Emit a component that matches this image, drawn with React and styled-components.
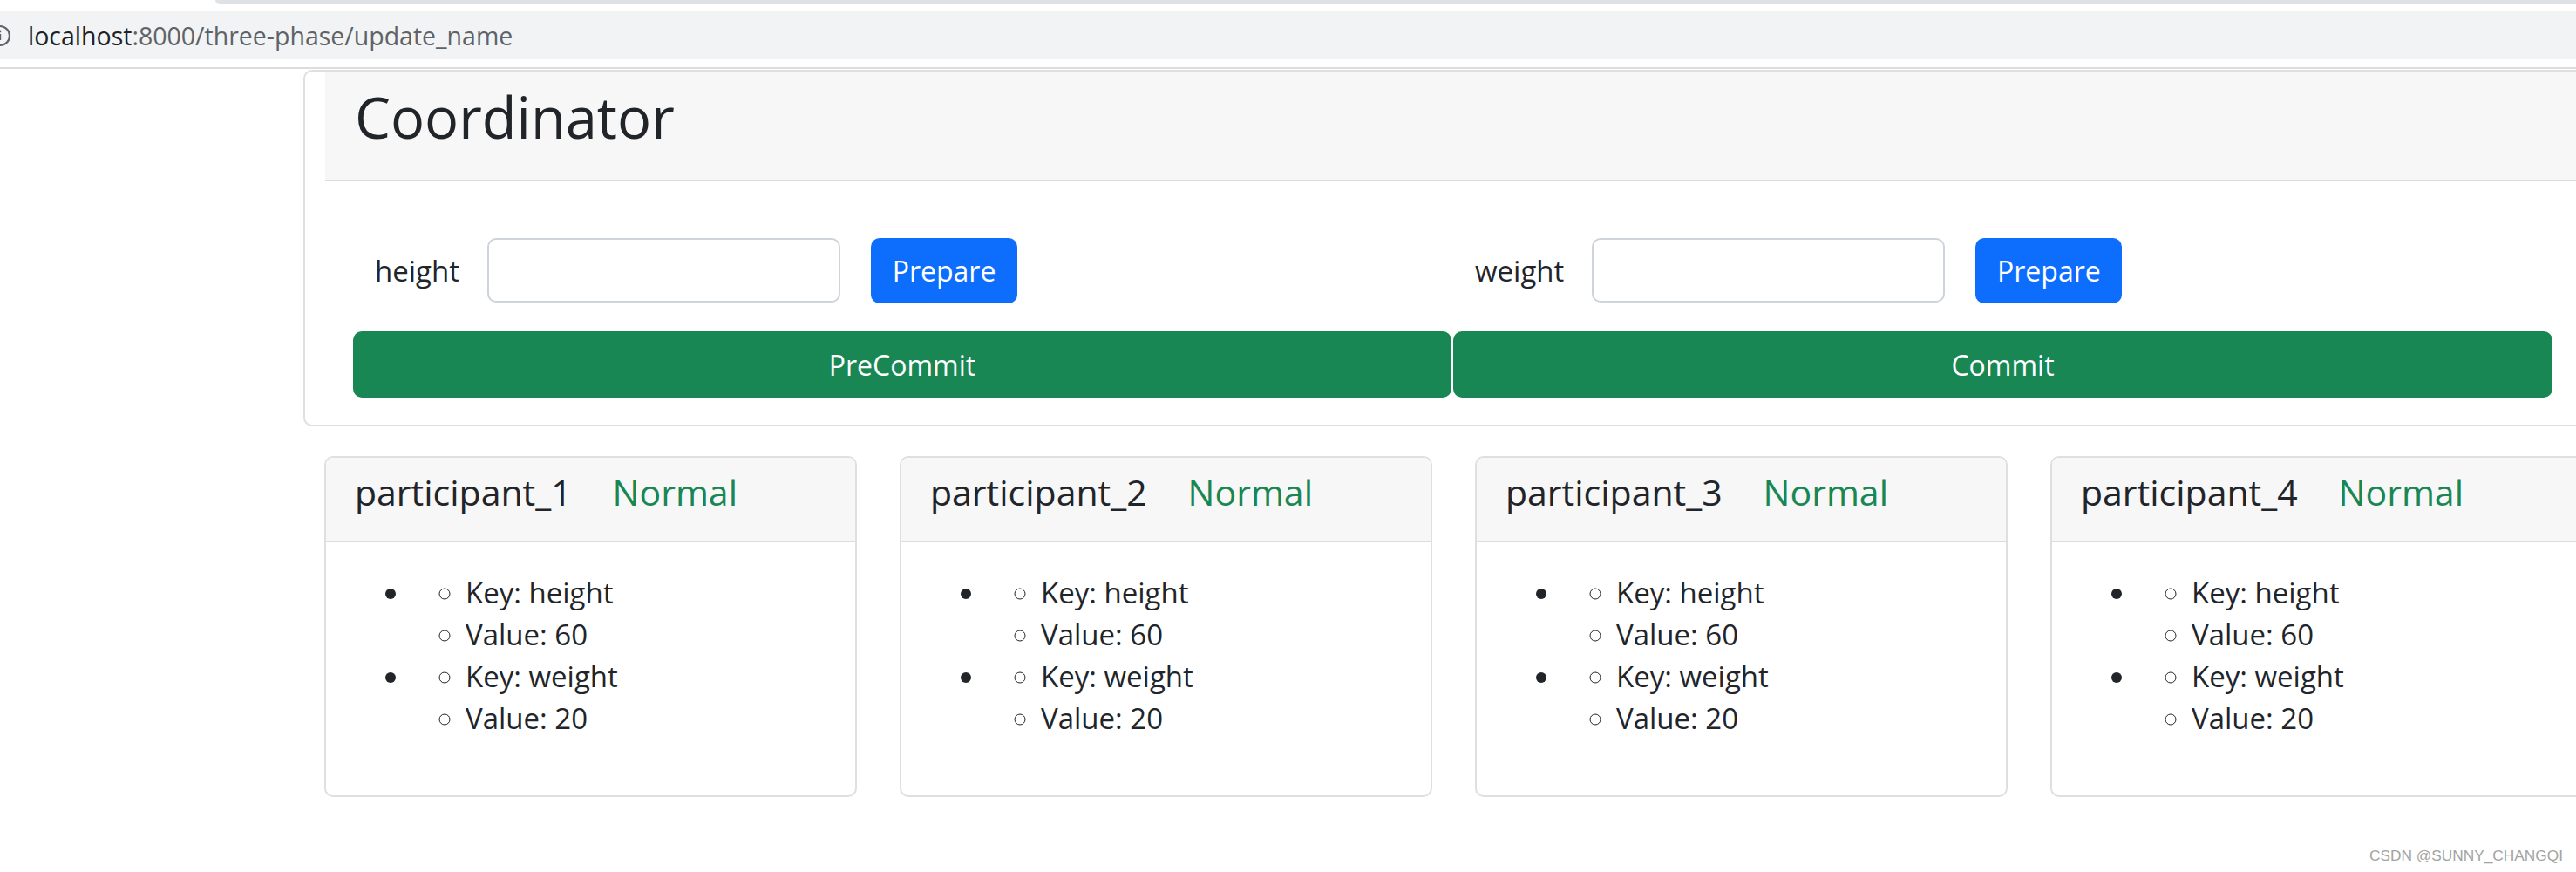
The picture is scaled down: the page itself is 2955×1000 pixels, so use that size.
import React from "react";
import styled, { createGlobalStyle } from "styled-components";

const GlobalStyle = createGlobalStyle`
  html, body {
    margin: 0;
    padding: 0;
    background: #fff;
  }
  body {
    font-family: "Open Sans", "Noto Sans", sans-serif;
    color: #212529;
    overflow: hidden;
  }
  * {
    box-sizing: border-box;
  }
`;

const participants = [1, 2, 3, 4].map((n) => ({
  name: `participant_${n}`,
  status: "Normal",
  entries: [
    { key: "height", value: 60 },
    { key: "weight", value: 20 },
  ],
}));

const fields = [
  { name: "height", action: "PreCommit" },
  { name: "weight", action: "Commit" },
];

const App = () => {
  return (
    <Screen>
      <GlobalStyle />
      <Chrome>
        <TabEdge />
        <AddressBar>
          <InfoIcon width="26" height="26" viewBox="0 0 26 26">
            <circle cx="13" cy="13" r="11" fill="none" stroke="#5f6368" strokeWidth="2.2" />
            <rect x="11.8" y="11" width="2.4" height="7" fill="#5f6368" />
            <circle cx="13" cy="8" r="1.4" fill="#5f6368" />
          </InfoIcon>
          <Host>localhost</Host>:8000/three-phase/update_name
        </AddressBar>
      </Chrome>

      <Page>
        <CoordCard>
          <CoordHeader>
            <CoordTitle>Coordinator</CoordTitle>
          </CoordHeader>
          <CoordBody>
            {fields.map((f) => (
              <Half key={f.name}>
                <FieldRow>
                  <FieldLabel>{f.name}</FieldLabel>
                  <FieldInput type="text" />
                  <PrepareButton>Prepare</PrepareButton>
                </FieldRow>
                <PhaseButton>{f.action}</PhaseButton>
              </Half>
            ))}
          </CoordBody>
        </CoordCard>

        <ParticipantRow>
          {participants.map((p) => (
            <ParticipantCard key={p.name}>
              <ParticipantHeader>
                <ParticipantName>{p.name}</ParticipantName>
                <Status>{p.status}</Status>
              </ParticipantHeader>
              <ParticipantBody>
                <OuterList>
                  {p.entries.map((e) => (
                    <li key={e.key}>
                      <InnerList>
                        <li>Key: {e.key}</li>
                        <li>Value: {e.value}</li>
                      </InnerList>
                    </li>
                  ))}
                </OuterList>
              </ParticipantBody>
            </ParticipantCard>
          ))}
        </ParticipantRow>
      </Page>

      <Watermark>CSDN @SUNNY_CHANGQI</Watermark>
    </Screen>
  );
};

export default App;

const Screen = styled.div`
  position: relative;
  width: 100vw;
  height: 100vh;
  overflow: hidden;
`;

const Chrome = styled.header`
  height: 79px;
  border-bottom: 2px solid #dadce0;
`;

const TabEdge = styled.div`
  height: 5px;
  margin-left: 247px;
  background: #dee1e6;
  border-bottom-left-radius: 6px;
`;

const AddressBar = styled.div`
  margin-top: 8px;
  height: 55px;
  display: flex;
  align-items: center;
  background: #f1f3f4;
  font-size: 28.5px;
  color: #5f6368;
  white-space: pre;
`;

const InfoIcon = styled.svg`
  flex: none;
  margin-left: -13px;
  margin-right: 19px;
`;

const Host = styled.span`
  color: #202124;
`;

const Page = styled.main`
  padding: 1px 0 0 348px;
`;

const CoordCard = styled.section`
  width: 2720px;
  border: 2px solid #dfdfdf;
  border-radius: 10px;
  background: #fff;
`;

const CoordHeader = styled.div`
  height: 126px;
  margin-left: 23px;
  padding: 13px 0 0 34px;
  background: #f7f7f7;
  border-bottom: 2px solid #dcdcdc;
`;

const CoordTitle = styled.h1`
  margin: 0;
  font-size: 65px;
  font-weight: 400;
  line-height: 1.2;
`;

const CoordBody = styled.div`
  display: grid;
  grid-template-columns: 1260px 1261px;
  column-gap: 2px;
  padding: 65px 0 31px 55px;
`;

const Half = styled.div`
  display: flex;
  flex-direction: column;
  gap: 33px;
`;

const FieldRow = styled.div`
  display: flex;
  align-items: center;
  height: 74px;
  padding-left: 25px;
`;

const FieldLabel = styled.label`
  margin-right: 32px;
  font-size: 33px;
`;

const FieldInput = styled.input`
  width: 405px;
  height: 74px;
  border: 2px solid #ced4da;
  border-radius: 10px;
  background: #fff;
  font: inherit;
  font-size: 33px;
  outline: none;
`;

const PrepareButton = styled.button`
  width: 168px;
  height: 75px;
  margin-left: 35px;
  border: none;
  border-radius: 10px;
  background: #0d6efd;
  color: #fff;
  font-family: inherit;
  font-size: 32px;
  cursor: pointer;
`;

const PhaseButton = styled.button`
  height: 76px;
  border: none;
  border-radius: 10px;
  background: #198754;
  color: #fff;
  font-family: inherit;
  font-size: 32px;
  cursor: pointer;
`;

const ParticipantRow = styled.div`
  display: flex;
  gap: 49px;
  margin: 34px 0 0 24px;
`;

const ParticipantCard = styled.div`
  flex: 0 0 611px;
  border: 2px solid #dfdfdf;
  border-radius: 10px;
  overflow: hidden;
`;

const ParticipantHeader = styled.div`
  display: flex;
  align-items: baseline;
  height: 97px;
  padding: 15px 33px 0;
  background: #f7f7f7;
  border-bottom: 2px solid #dcdcdc;
  font-size: 41px;
  line-height: 49px;
`;

const ParticipantName = styled.span`
  color: #212529;
`;

const Status = styled.span`
  margin-left: 47px;
  color: #198754;
`;

const ParticipantBody = styled.div`
  padding: 34px 33px 33px;
  font-size: 33px;
  line-height: 48px;
`;

const OuterList = styled.ul`
  margin: 0 0 31px;
  padding-left: 65px;
  list-style: disc;
`;

const InnerList = styled.ul`
  margin: 0;
  padding-left: 62px;
  list-style: circle;
`;

const Watermark = styled.div`
  position: absolute;
  right: 15px;
  bottom: 9px;
  font-family: "Liberation Sans", Arial, sans-serif;
  font-size: 17.3px;
  line-height: 20px;
  color: #a3a3a3;
  text-shadow: 0 0 1px #fff;
`;
